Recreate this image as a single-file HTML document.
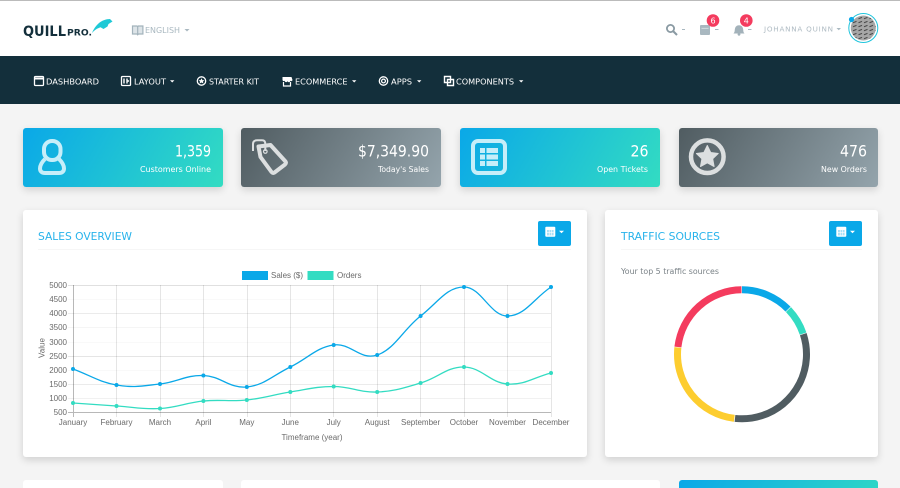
<!DOCTYPE html>
<html lang="en">
<head>
<meta charset="utf-8">
<title>QuillPro Dashboard</title>
<style>
html,body{margin:0;padding:0;width:900px;height:488px;overflow:hidden;background:#f4f4f4}
#wrap{position:relative;width:900px;height:488px;overflow:hidden;background:#f4f4f4;contain:strict}
.b{position:absolute}
#top{left:0;top:0;width:900px;height:55px;background:#fff;border-top:1px solid #bbb}
#nav{left:0;top:56px;width:900px;height:48px;background:#132f3b}
.stat{top:128px;height:59px;width:199.5px;border-radius:3px;box-shadow:0 3px 8px rgba(0,0,0,.14)}
.blue{background:linear-gradient(120deg,#0aa8e8 0%,#33dcc2 100%)}
.gray{background:linear-gradient(120deg,#505c61 0%,#94a4ac 100%)}
.panel{background:#fff;border-radius:3px;box-shadow:0 3px 8px rgba(0,0,0,.15)}
.btn{background:#0aa8e8;border-radius:2px;top:221px;width:33px;height:24.5px}
svg{position:absolute;left:0;top:0;display:block}
text{font-family:"DejaVu Sans",sans-serif}
.c text{font-family:"Liberation Sans",sans-serif;font-size:8px;fill:#6a6a6a}
</style>
</head>
<body>
<div id="wrap">
<div class="b" id="top"></div>
<div class="b" id="nav"></div>
<div class="b stat blue" style="left:23px"></div>
<div class="b stat gray" style="left:241px"></div>
<div class="b stat blue" style="left:460px"></div>
<div class="b stat gray" style="left:678.7px"></div>
<div class="b panel" style="left:23px;top:210px;width:564px;height:247px"></div>
<div class="b panel" style="left:605px;top:210px;width:273px;height:247px"></div>
<div class="b panel" style="left:23px;top:480px;width:200px;height:8px;border-radius:3px 3px 0 0;box-shadow:none"></div>
<div class="b panel" style="left:241px;top:480px;width:419px;height:8px;border-radius:3px 3px 0 0;box-shadow:none"></div>
<div class="b" style="left:679px;top:480px;width:199px;height:8px;border-radius:3px 3px 0 0;background:linear-gradient(120deg,#0aa8e8 0%,#33dcc2 100%) 0 0/199px 59px no-repeat"></div>
<div class="b btn" style="left:538px"></div>
<div class="b btn" style="left:829px"></div>

<svg width="900" height="488" viewBox="0 0 900 488" xmlns="http://www.w3.org/2000/svg">
<defs>
<pattern id="h" width="5.500" height="4" patternUnits="userSpaceOnUse"><rect width="5.500" height="4" fill="#a6a6a6"/><path d="M.5 2.800 L4 1.400" stroke="#4a4a4a" stroke-width="1.100"/></pattern>
</defs>

<!-- logo -->
<text x="23" y="36" font-size="14" font-weight="700" fill="#132f3b" textLength="43" lengthAdjust="spacingAndGlyphs">QUILL</text>
<text x="67" y="35.500" font-size="8.500" font-weight="700" fill="#132f3b" textLength="25" lengthAdjust="spacingAndGlyphs">PRO.</text>
<path d="M91.700 33.500 C93.500 29 96 25.500 99 23 C102 20.500 106 19 110 19 L112.500 21.500 L108.500 24 L107.500 26.500 L103.500 29 L100.500 27.300 L97 28.800 C95 30 93 31.700 91.700 33.500Z" fill="#1fc9d6"/>
<!-- language -->
<path d="M132.500 26 h4.500 l.7 .8 l.7 -.8 h4.500 v8 h-4.500 l-.7 .8 l-.7 -.8 h-4.500z M137.700 27 v7" fill="#dde4e8" stroke="#a3b3bc" stroke-width="1.200"/>
<text x="145" y="33" font-size="7.500" fill="#a9b8c0" textLength="35" lengthAdjust="spacingAndGlyphs">ENGLISH</text>
<path d="M184.500 29 h5 l-2.500 2.500z" fill="#a9b8c0"/>

<!-- header right -->
<circle cx="670.500" cy="28.500" r="3.600" fill="none" stroke="#8a9aa3" stroke-width="1.800"/>
<path d="M673 31 L677 35" stroke="#8a9aa3" stroke-width="2"/>
<path d="M682 29.500 h3" stroke="#a9b8c0" stroke-width="1"/>
<rect x="700" y="25" width="10" height="10" rx="1" fill="#a9b8c0"/>
<path d="M701.500 28.300 h7" stroke="#dfe5e8" stroke-width=".8"/>
<path d="M715 29.500 h3.500" stroke="#a9b8c0" stroke-width="1"/>
<path d="M733.500 33.500 c1.500 -1.500 1 -3 1.500 -5 c.4 -1.900 1.800 -3.300 4 -3.300 c2.200 0 3.600 1.400 4 3.300 c.5 2 0 3.500 1.500 5z" fill="#a3b2ba"/>
<circle cx="739" cy="34.300" r="1.400" fill="#a3b2ba"/>
<path d="M748 29.500 h3.500" stroke="#a9b8c0" stroke-width="1"/>
<circle cx="713" cy="20.500" r="6.300" fill="#f43b5e"/>
<text x="713" y="23.400" font-size="8" fill="#fff" text-anchor="middle">6</text>
<circle cx="746.300" cy="20.500" r="6.300" fill="#f43b5e"/>
<text x="746.300" y="23.400" font-size="8" fill="#fff" text-anchor="middle">4</text>
<text x="764" y="31.500" font-size="7.200" fill="#b0bcc4" textLength="69" lengthAdjust="spacing">JOHANNA QUINN</text>
<path d="M836.500 28 h4.500 l-2.250 2.200z" fill="#a9b8c0"/>
<circle cx="863.300" cy="28" r="14.500" fill="#fff" stroke="#1fc4dc" stroke-width="1"/>
<circle cx="863.300" cy="28" r="12.500" fill="url(#h)"/>
<circle cx="851.500" cy="19.500" r="2.600" fill="#0aa8e8"/>

<!-- nav icons + text -->
<g fill="none" stroke="#fff" stroke-width="1.300">
<rect x="34.500" y="76.500" width="9" height="9" rx="1"/><path d="M34.500 78.500 h9" stroke-width="2"/>
<rect x="121.500" y="76.500" width="9" height="9" rx="1"/><path d="M124 78.500 v5 M127 78.500 v5 M127 81 h2" stroke-width="1.400"/>
<circle cx="201.500" cy="81" r="4.200" stroke-width="1.300"/>
<circle cx="383.500" cy="81" r="4.200"/><circle cx="383.500" cy="81" r="1.900"/>
<path d="M444.500 76.500 h6 v3 h3 v6 h-6 v-3 h-3z M447.500 79.500 h3 v3 h-3z" stroke-width="1.400"/>
</g>
<path d="M201.500 78.300 l.9 1.800 2 .2 -1.500 1.300 .5 1.900 -1.900 -1 -1.900 1 .5 -1.900 -1.500 -1.300 2 -.2z" fill="#fff"/>
<path d="M282.500 77 h9 l1 3 a1.300 1.300 0 0 1 -2.200 .8 a1.400 1.400 0 0 1 -2.800 0 a1.400 1.400 0 0 1 -2.800 0 a1.300 1.300 0 0 1 -2.200 -.8z" fill="#fff"/>
<path d="M283.500 82 v4 h7 v-4" fill="none" stroke="#fff" stroke-width="1.200"/>
<g fill="#fff" font-size="8.300">
<text x="46" y="84.500" textLength="53" lengthAdjust="spacingAndGlyphs">DASHBOARD</text>
<text x="134" y="84.500" textLength="32" lengthAdjust="spacingAndGlyphs">LAYOUT</text>
<text x="209" y="84.500" textLength="50" lengthAdjust="spacingAndGlyphs">STARTER KIT</text>
<text x="295" y="84.500" textLength="52.500" lengthAdjust="spacingAndGlyphs">ECOMMERCE</text>
<text x="391" y="84.500" textLength="21" lengthAdjust="spacingAndGlyphs">APPS</text>
<text x="456" y="84.500" textLength="58" lengthAdjust="spacingAndGlyphs">COMPONENTS</text>
<path d="M170 80.300 h4.400 l-2.200 2.200z M352 80.300 h4.400 l-2.200 2.200z M417 80.300 h4.400 l-2.200 2.200z M519 80.300 h4.400 l-2.200 2.200z"/>
</g>

<!-- stat icons -->
<g fill="none" stroke="#c6eef9" stroke-width="4">
<rect x="44" y="141" width="16.500" height="19" rx="8"/>
<path d="M45 159 C42 162 40 165 40 168.500 C40 171.500 42 173 45 173 H59 C62 173 64 171.500 64 168.500 C64 165 62 162 59 159"/>
<rect x="473" y="141" width="32" height="32" rx="5"/>
</g>
<g fill="#c6eef9">
<rect x="480" y="148" width="5" height="5"/><rect x="486.500" y="148" width="11.500" height="5"/>
<rect x="480" y="154.500" width="5" height="5"/><rect x="486.500" y="154.500" width="11.500" height="5"/>
<rect x="480" y="161" width="5" height="5"/><rect x="486.500" y="161" width="11.500" height="5"/>
</g>
<g fill="none" stroke="#dcdfe0" stroke-width="4" stroke-linejoin="round">
<path d="M258.500 146.500 L270.500 145 L285.500 161.500 Q286.500 163 285 164.500 L274.500 172.500 Q272.800 173.500 271.500 172 L260.500 157Z"/>
<path d="M253 151 V144 Q253 140.300 257.500 140.300 H262 Q265.300 140.300 265.300 144 V151" stroke-width="2"/>
<circle cx="707.300" cy="156.700" r="16.300" stroke-width="4.500"/>
</g>
<circle cx="265.300" cy="151.500" r="1.800" fill="none" stroke="#dcdfe0" stroke-width="1.200"/>
<path d="M707.300 145.500 L710.700 152.500 L718.200 153.500 L712.700 158.800 L714.100 166.500 L707.300 162.800 L700.500 166.500 L701.900 158.800 L696.400 153.500 L703.900 152.500Z" fill="#dcdfe0" stroke="#dcdfe0" stroke-linejoin="round"/>

<!-- stat text -->
<g fill="#fff">
<g font-size="16">
<text x="175" y="156.500" textLength="36" lengthAdjust="spacingAndGlyphs">1,359</text>
<text x="358" y="156.500" textLength="71" lengthAdjust="spacingAndGlyphs">$7,349.90</text>
<text x="630.500" y="156.500" textLength="18" lengthAdjust="spacingAndGlyphs">26</text>
<text x="840" y="156.500" textLength="27" lengthAdjust="spacingAndGlyphs">476</text>
</g>
<g font-size="7.800">
<text x="140" y="172" textLength="71" lengthAdjust="spacingAndGlyphs">Customers Online</text>
<text x="378" y="172" textLength="51" lengthAdjust="spacingAndGlyphs">Today's Sales</text>
<text x="597" y="172" textLength="51" lengthAdjust="spacingAndGlyphs">Open Tickets</text>
<text x="821" y="172" textLength="46" lengthAdjust="spacingAndGlyphs">New Orders</text>
</g>
</g>

<!-- panel headers -->
<path d="M38 249.500 H571 M621 249.500 H862" stroke="#f6f6f6" stroke-width="1"/>
<g fill="#0aa8e8" fill-opacity=".88" font-size="10.200">
<text x="38" y="240" textLength="94" lengthAdjust="spacingAndGlyphs">SALES OVERVIEW</text>
<text x="621" y="240" textLength="99" lengthAdjust="spacingAndGlyphs">TRAFFIC SOURCES</text>
</g>
<text x="621" y="274" font-size="7.800" fill="#7a8287" textLength="98" lengthAdjust="spacingAndGlyphs">Your top 5 traffic sources</text>
<g>
<rect x="545.300" y="226.700" width="10" height="10" rx="1" fill="#fff"/>
<rect x="547" y="230" width="6.600" height="5.400" fill="#a8dff7"/>
<path d="M547 232.700 h6.600 M549.200 230 v5.400 M551.400 230 v5.400" stroke="#fff" stroke-width=".6"/>
<path d="M559 230.800 h5 l-2.500 2.500z" fill="#fff"/>
<rect x="836.300" y="226.700" width="10" height="10" rx="1" fill="#fff"/>
<rect x="838" y="230" width="6.600" height="5.400" fill="#a8dff7"/>
<path d="M838 232.700 h6.600 M840.200 230 v5.400 M842.400 230 v5.400" stroke="#fff" stroke-width=".6"/>
<path d="M850 230.800 h5 l-2.500 2.500z" fill="#fff"/>
</g>

<!-- chart -->
<g class="c">
<rect x="242" y="271" width="26" height="9" fill="#0aa8e8"/>
<text x="271" y="278">Sales ($)</text>
<rect x="307.500" y="271" width="26" height="9" fill="#33dcc2"/>
<text x="337" y="278">Orders</text>
<g stroke="#000" stroke-width="1" fill="none">
<path stroke-opacity=".12" d="M68 285.500 H551"/>
<path stroke-opacity=".025" d="M68 299.500 H551 M68 342.500 H551 M68 370.500 H551"/>
<path stroke-opacity=".08" d="M68 313.500 H551 M68 384.500 H551"/>
<path stroke-opacity=".04" d="M68 327.500 H551"/>
<path stroke-opacity=".1" d="M68 356.500 H551"/>
<path stroke-opacity=".055" d="M68 398.500 H551"/>
<path stroke-opacity=".1" d="M116.500 285 V417 M160.500 285 V417 M203.500 285 V417 M247.500 285 V417 M290.500 285 V417 M333.500 285 V417 M377.500 285 V417 M420.500 285 V417 M464.500 285 V417 M507.500 285 V417 M551.500 285 V417"/>
</g>
<path d="M73.500 285 V417 M68 412.500 H551" stroke="#000" stroke-opacity=".28" fill="none"/>
<g text-anchor="end">
<text x="67" y="288">5000</text><text x="67" y="302">4500</text><text x="67" y="316">4000</text><text x="67" y="330">3500</text><text x="67" y="345">3000</text><text x="67" y="359">2500</text><text x="67" y="373">2000</text><text x="67" y="387">1500</text><text x="67" y="401">1000</text><text x="67" y="415">500</text>
</g>
<g text-anchor="middle">
<text x="73" y="425">January</text><text x="116.500" y="425">February</text><text x="160" y="425">March</text><text x="203.400" y="425">April</text><text x="246.800" y="425">May</text><text x="290.300" y="425">June</text><text x="333.700" y="425">July</text><text x="377.200" y="425">August</text><text x="420.600" y="425">September</text><text x="464" y="425">October</text><text x="507.500" y="425">November</text><text x="551" y="425">December</text>
<text x="312" y="440">Timeframe (year)</text>
<text transform="translate(44.500,348) rotate(-90)">Value</text>
</g>
<path fill="none" stroke="#0aa8e8" stroke-width="1.300" d="M73 369 C90.400 375.400 99.100 382 116.500 385 C133.900 388 142.600 385.900 160 384 C177.400 382.100 186 374.900 203.400 375.500 C220.800 376.100 229.400 388.700 246.800 387 C264.200 385.300 272.900 375.400 290.300 367 C307.700 358.600 316.300 347.400 333.700 345 C351.100 342.600 359.800 360.800 377.200 355 C394.600 349.200 403.200 329.600 420.600 316 C438 302.400 446.600 287 464 287 C481.400 287 490.100 316 507.500 316 C524.900 316 533.600 298.600 551 287"/>
<path fill="none" stroke="#33dcc2" stroke-width="1.300" d="M73 403 C90.400 404.200 99.100 404.900 116.500 406 C133.900 407.100 142.600 409.500 160 408.500 C177.400 407.500 186 402.700 203.400 401 C220.800 399.300 229.400 401.800 246.800 400 C264.200 398.200 272.900 394.700 290.300 392 C307.700 389.300 316.300 386.500 333.700 386.500 C351.100 386.500 359.800 392.700 377.200 392 C394.600 391.300 403.200 388 420.600 383 C438 378 446.600 366.800 464 367 C481.400 367.200 490.100 382.800 507.500 384 C524.900 385.200 533.600 377.400 551 373"/>
<g fill="#0aa8e8">
<circle cx="73" cy="369" r="2"/><circle cx="116.500" cy="385" r="2"/><circle cx="160" cy="384" r="2"/><circle cx="203.400" cy="375.500" r="2"/><circle cx="246.800" cy="387" r="2"/><circle cx="290.300" cy="367" r="2"/><circle cx="333.700" cy="345" r="2"/><circle cx="377.200" cy="355" r="2"/><circle cx="420.600" cy="316" r="2"/><circle cx="464" cy="287" r="2"/><circle cx="507.500" cy="316" r="2"/><circle cx="551" cy="287" r="2"/>
</g>
<g fill="#33dcc2">
<circle cx="73" cy="403" r="2"/><circle cx="116.500" cy="406" r="2"/><circle cx="160" cy="408.500" r="2"/><circle cx="203.400" cy="401" r="2"/><circle cx="246.800" cy="400" r="2"/><circle cx="290.300" cy="392" r="2"/><circle cx="333.700" cy="386.500" r="2"/><circle cx="377.200" cy="392" r="2"/><circle cx="420.600" cy="383" r="2"/><circle cx="464" cy="367" r="2"/><circle cx="507.500" cy="384" r="2"/><circle cx="551" cy="373" r="2"/>
</g>
</g>

<!-- donut -->
<g fill="none" stroke-width="7" transform="translate(742,354.300) rotate(-90)">
<circle r="64.500" pathLength="360" stroke="#0aa8e8" stroke-dasharray="45.200 314.800" transform="rotate(.4)"/>
<circle r="64.500" pathLength="360" stroke="#33dcc2" stroke-dasharray="24.800 335.200" transform="rotate(46.500)"/>
<circle r="64.500" pathLength="360" stroke="#505c61" stroke-dasharray="114.200 245.800" transform="rotate(72.200)"/>
<circle r="64.500" pathLength="360" stroke="#fdcd2f" stroke-dasharray="88.800 271.200" transform="rotate(187.300)"/>
<circle r="64.500" pathLength="360" stroke="#f43b5e" stroke-dasharray="82.700 277.300" transform="rotate(276.900)"/>
</g>
</svg>
</div>
</body>
</html>
